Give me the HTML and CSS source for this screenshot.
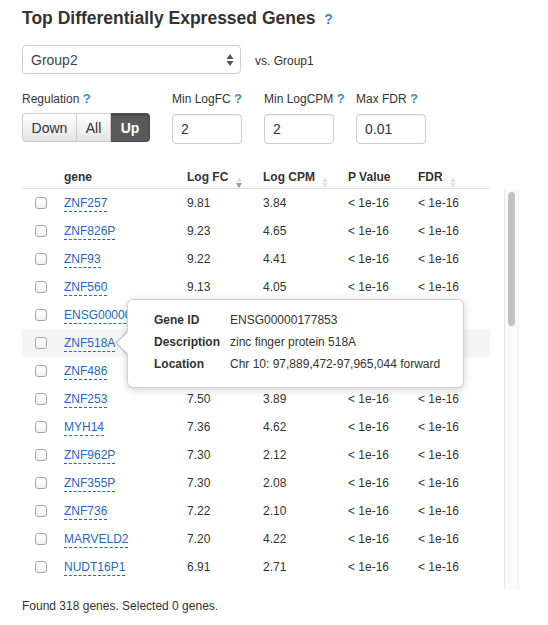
FILE: index.html
```html
<!DOCTYPE html>
<html>
<head>
<meta charset="utf-8">
<link rel="stylesheet" href="styles.css">
</head>
<body>
<div class="page">
  <h2 class="title">Top Differentially Expressed Genes <span class="help help-lg">?</span></h2>

  <div class="group-row">
    <div class="select">
      <span class="select-text">Group2</span>
      <svg class="select-arrows" width="8" height="14" viewBox="0 0 8 14"><path d="M4 1 L7.5 6 L0.5 6 Z" fill="#555"/><path d="M4 13 L7.5 8 L0.5 8 Z" fill="#555"/></svg>
    </div>
    <span class="vs">vs. Group1</span>
  </div>

  <div class="filters">
    <div class="filter">
      <div class="flabel">Regulation <span class="help">?</span></div>
      <div class="btn-group">
        <span class="btn btn-down">Down</span><span class="btn btn-all">All</span><span class="btn btn-up">Up</span>
      </div>
    </div>
    <div class="filter">
      <div class="flabel">Min LogFC <span class="help">?</span></div>
      <div class="input">2</div>
    </div>
    <div class="filter">
      <div class="flabel">Min LogCPM <span class="help">?</span></div>
      <div class="input">2</div>
    </div>
    <div class="filter">
      <div class="flabel">Max FDR <span class="help">?</span></div>
      <div class="input">0.01</div>
    </div>
  </div>

  <table class="grid head">
    <colgroup><col class="c-chk"><col class="c-gene"><col class="c-fc"><col class="c-cpm"><col class="c-p"><col class="c-fdr"></colgroup>
    <thead>
      <tr>
        <th></th>
        <th>gene</th>
        <th>Log FC <span class="sort"><i class="up"></i><i class="down active"></i></span></th>
        <th>Log CPM <span class="sort"><i class="up"></i><i class="down"></i></span></th>
        <th>P Value</th>
        <th>FDR <span class="sort"><i class="up"></i><i class="down"></i></span></th>
      </tr>
    </thead>
  </table>

  <div class="table-wrap">
    <div class="scroller">
      <table class="grid body">
        <colgroup><col class="c-chk"><col class="c-gene"><col class="c-fc"><col class="c-cpm"><col class="c-p"><col class="c-fdr"></colgroup>
        <tbody>
          <tr><td><span class="cb"></span></td><td><a class="gene">ZNF257</a></td><td>9.81</td><td>3.84</td><td>&lt; 1e-16</td><td>&lt; 1e-16</td></tr>
          <tr><td><span class="cb"></span></td><td><a class="gene">ZNF826P</a></td><td>9.23</td><td>4.65</td><td>&lt; 1e-16</td><td>&lt; 1e-16</td></tr>
          <tr><td><span class="cb"></span></td><td><a class="gene">ZNF93</a></td><td>9.22</td><td>4.41</td><td>&lt; 1e-16</td><td>&lt; 1e-16</td></tr>
          <tr><td><span class="cb"></span></td><td><a class="gene">ZNF560</a></td><td>9.13</td><td>4.05</td><td>&lt; 1e-16</td><td>&lt; 1e-16</td></tr>
          <tr><td><span class="cb"></span></td><td><a class="gene">ENSG00000255389</a></td><td></td><td></td><td></td><td></td></tr>
          <tr class="hover"><td><span class="cb"></span></td><td><a class="gene">ZNF518A</a></td><td></td><td></td><td></td><td></td></tr>
          <tr><td><span class="cb"></span></td><td><a class="gene">ZNF486</a></td><td></td><td></td><td></td><td></td></tr>
          <tr><td><span class="cb"></span></td><td><a class="gene">ZNF253</a></td><td>7.50</td><td>3.89</td><td>&lt; 1e-16</td><td>&lt; 1e-16</td></tr>
          <tr><td><span class="cb"></span></td><td><a class="gene">MYH14</a></td><td>7.36</td><td>4.62</td><td>&lt; 1e-16</td><td>&lt; 1e-16</td></tr>
          <tr><td><span class="cb"></span></td><td><a class="gene">ZNF962P</a></td><td>7.30</td><td>2.12</td><td>&lt; 1e-16</td><td>&lt; 1e-16</td></tr>
          <tr><td><span class="cb"></span></td><td><a class="gene">ZNF355P</a></td><td>7.30</td><td>2.08</td><td>&lt; 1e-16</td><td>&lt; 1e-16</td></tr>
          <tr><td><span class="cb"></span></td><td><a class="gene">ZNF736</a></td><td>7.22</td><td>2.10</td><td>&lt; 1e-16</td><td>&lt; 1e-16</td></tr>
          <tr><td><span class="cb"></span></td><td><a class="gene">MARVELD2</a></td><td>7.20</td><td>4.22</td><td>&lt; 1e-16</td><td>&lt; 1e-16</td></tr>
          <tr><td><span class="cb"></span></td><td><a class="gene">NUDT16P1</a></td><td>6.91</td><td>2.71</td><td>&lt; 1e-16</td><td>&lt; 1e-16</td></tr>
        </tbody>
      </table>
    </div>
    <div class="scrollbar"><div class="thumb"></div></div>
  </div>

  <div class="footer">Found 318 genes. Selected 0 genes.</div>

  <div class="tooltip">
    <div class="tip-row"><span class="tip-label">Gene ID</span><span class="tip-value">ENSG00000177853</span></div>
    <div class="tip-row"><span class="tip-label">Description</span><span class="tip-value">zinc finger protein 518A</span></div>
    <div class="tip-row"><span class="tip-label">Location</span><span class="tip-value">Chr 10: 97,889,472-97,965,044 forward</span></div>
  </div>
</div>
</body>
</html>
```

FILE: styles.css
```css
* { box-sizing: border-box; }

html, body {
  margin: 0;
  padding: 0;
  background: #fff;
}

body {
  font-family: "Liberation Sans", Arial, sans-serif;
  font-size: 12px;
  color: #333;
}

.page {
  position: relative;
  width: 548px;
  height: 625px;
  padding: 7px 22px 0;
  overflow: hidden;
}

.title {
  margin: 0;
  font-size: 17.5px;
  line-height: 22px;
  font-weight: bold;
  color: #333;
}

.help {
  color: #3b8bd0;
  font-weight: bold;
  font-size: 13px;
}

.help-lg {
  font-size: 14px;
  margin-left: 4px;
}

.group-row {
  display: flex;
  align-items: center;
  margin-top: 15px;
}

.select {
  width: 219px;
  height: 29px;
  border: 1px solid #ccc;
  border-radius: 4px;
  background: #fff;
  display: flex;
  align-items: center;
  justify-content: space-between;
  padding: 0 6px 0 8px;
  font-size: 14px;
  color: #444;
}

.select-arrows {
  display: block;
}

.vs {
  margin-left: 14px;
  padding-top: 3px;
  font-size: 12px;
  color: #333;
}

.filters {
  display: grid;
  grid-template-columns: 128px 70px 70px 70px;
  column-gap: 22px;
  margin-top: 17px;
}

.filter {
  display: flex;
  flex-direction: column;
  gap: 6px;
}

.flabel {
  white-space: nowrap;
  line-height: 16px;
  font-size: 12px;
}

.btn-group {
  display: flex;
  height: 29px;
}

.btn {
  display: flex;
  align-items: center;
  justify-content: center;
  height: 29px;
  font-size: 14px;
  color: #333;
  border: 1px solid #ccc;
  background: linear-gradient(#ffffff, #e4e4e4);
}

.btn-down {
  width: 55px;
  border-radius: 4px 0 0 4px;
}

.btn-all {
  width: 34px;
  border-left: none;
}

.btn-up {
  width: 39px;
  border-radius: 0 4px 4px 0;
  border-color: #4d4d4d;
  border-left: none;
  background: #5a5a5a;
  color: #fff;
  font-weight: bold;
  box-shadow: inset 0 2px 3px rgba(0,0,0,0.2);
}

.input {
  width: 70px;
  height: 30px;
  margin-top: 1px;
  border: 1px solid #ccc;
  border-radius: 4px;
  padding: 0 8px;
  display: flex;
  align-items: center;
  font-size: 14px;
  color: #333;
  box-shadow: inset 0 1px 1px rgba(0,0,0,0.06);
}

.grid {
  width: 468px;
  border-collapse: collapse;
  table-layout: fixed;
}

.c-chk { width: 42px; }
.c-gene { width: 123px; }
.c-fc { width: 76px; }
.c-cpm { width: 85px; }
.c-p { width: 70px; }
.c-fdr { width: 72px; }

.head {
  margin-top: 17px;
}

.head th {
  padding: 6px 0 0;
  line-height: 21px;
  text-align: left;
  font-weight: bold;
  font-size: 12px;
  color: #333;
  border-bottom: 1px solid #ddd;
  white-space: nowrap;
}

.sort {
  display: inline-flex;
  flex-direction: column;
  gap: 1px;
  margin-left: 4px;
  vertical-align: -1px;
}

.sort i {
  display: block;
  width: 0;
  height: 0;
  border-left: 3.5px solid transparent;
  border-right: 3.5px solid transparent;
}

.sort .up {
  border-bottom: 5px solid #e2e2e2;
}

.sort .down {
  border-top: 5px solid #e2e2e2;
}

.sort .down.active {
  border-top-color: #8596d9;
}

.table-wrap {
  display: flex;
  gap: 14px;
  height: 400px;
}

.scroller {
  width: 468px;
  height: 400px;
  overflow: hidden;
}

.scrollbar {
  width: 15px;
  height: 400px;
  background: #fafafa;
  border-left: 1px solid #e6e6e6;
  border-right: 1px solid #efefef;
  padding: 3px 3px 0;
}

.thumb {
  width: 7px;
  height: 134px;
  border-radius: 4px;
  background: #c2c2c2;
}

.body td {
  height: 28px;
  padding: 0;
  font-size: 12px;
  color: #333;
  white-space: nowrap;
  overflow: hidden;
}

.body tr.hover td {
  background: #f5f5f5;
}

.cb {
  display: block;
  width: 12px;
  height: 12px;
  margin-left: 13px;
  border: 1px solid #a6a6a6;
  border-radius: 3px;
  background: linear-gradient(#ffffff, #f2f2f2);
}

.gene {
  color: #2468c0;
  text-decoration: none;
  border-bottom: 1px dashed #2468c0;
  padding-bottom: 1px;
  font-size: 12px;
}

.footer {
  margin-top: 9px;
  line-height: 16px;
  font-size: 12px;
  color: #333;
}

.tooltip {
  position: absolute;
  left: 127px;
  top: 299px;
  width: 337px;
  height: 89px;
  padding: 9px 20px 0 26px;
  background: #fff;
  border: 1px solid rgba(0,0,0,0.18);
  border-radius: 6px;
  box-shadow: 0 2px 8px rgba(0,0,0,0.18);
}

.tooltip::before,
.tooltip::after {
  content: "";
  position: absolute;
  width: 0;
  height: 0;
  border-style: solid;
  border-color: transparent;
}

.tooltip::before {
  left: -13px;
  top: 31px;
  border-width: 12px 12px 12px 0;
  border-right-color: rgba(0,0,0,0.18);
}

.tooltip::after {
  left: -11px;
  top: 32px;
  border-width: 11px 11px 11px 0;
  border-right-color: #fff;
}

.tip-row {
  display: flex;
  line-height: 22px;
  font-size: 12px;
  white-space: nowrap;
}

.tip-label {
  width: 76px;
  font-weight: bold;
  color: #333;
}

.tip-value {
  color: #333;
}
```
